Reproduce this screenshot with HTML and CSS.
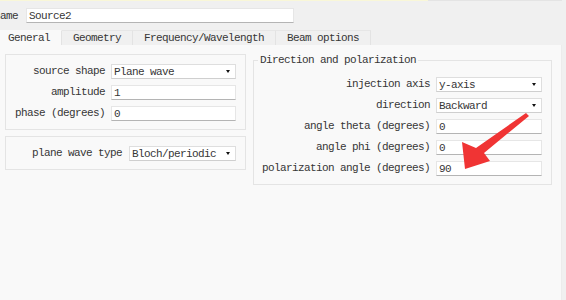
FILE: index.html
```html
<!DOCTYPE html>
<html lang="en">
<head>
    <meta charset="UTF-8">
    <title>Source2</title>
    <link rel="stylesheet" href="styles.css">
</head>
<body>

    <div class="topline"></div>

    <!-- object name -->
    <div class="name-row">
        <span class="name-label">name</span>
        <div class="field name-field">Source2</div>
    </div>

    <!-- tab bar -->
    <div class="tabs">
        <div class="tab active">General</div>
        <div class="tab">Geometry</div>
        <div class="tab">Frequency/Wavelength</div>
        <div class="tab">Beam options</div>
    </div>

    <div class="panel">
        <div class="left-col">
            <div class="group group-shape">
                <span class="label">source shape</span>
                <div class="combo">Plane wave</div>
                <span class="label">amplitude</span>
                <div class="field">1</div>
                <span class="label">phase (degrees)</span>
                <div class="field">0</div>
            </div>

            <div class="group group-type">
                <span class="label">plane wave type</span>
                <div class="combo">Bloch/periodic</div>
            </div>
        </div>

        <fieldset class="direction">
            <legend>Direction and polarization</legend>
            <div class="rows">
                <span class="label">injection axis</span>
                <div class="combo">y-axis</div>
                <span class="label">direction</span>
                <div class="combo">Backward</div>
                <span class="label">angle theta (degrees)</span>
                <div class="field">0</div>
                <span class="label">angle phi (degrees)</span>
                <div class="field">0</div>
                <span class="label">polarization angle (degrees)</span>
                <div class="field">90</div>
            </div>
        </fieldset>
    </div>

    <!-- red annotation arrow -->
    <svg class="arrow" width="566" height="300" viewBox="0 0 566 300">
        <polygon points="526,113 529,116 484,153 490,161 465,169 462,142 476,148" fill="#f03434"/>
    </svg>

</body>
</html>
```

FILE: styles.css
```css
body {
    margin: 0;
    background-color: #f0f0f0;
    font-family: 'Liberation Mono', monospace;
    font-size: 11px;
    letter-spacing: -0.6px;
    color: #363636;
    height: 300px;
    overflow: hidden;
    position: relative;
}

.topline {
    height: 1px;
    width: 562px;
    background: linear-gradient(to right, #f9f7d8 0, #f9f7d8 428px, #e4e4e4 428px);
}

.name-row {
    display: flex;
    align-items: flex-start;
    height: 29px;
    margin-left: -6px;
}

.name-label {
    width: 24px;
    margin-top: 8px;
    line-height: 14px;
}

.name-field {
    width: 268px;
    margin-top: 7px;
    margin-left: 8px;
}

.tabs {
    display: flex;
    height: 15px;
}

.tab {
    padding: 0 11px;
    line-height: 15px;
    border-top: 1px solid #e6e6e6;
    border-right: 1px solid #e3e3e3;
    box-sizing: border-box;
    height: 15px;
}

.tab.active {
    background-color: #f9f9f9;
    border-top-color: #f9f9f9;
    padding: 0 12px 0 8px;
    width: 62px;
}

.panel {
    display: flex;
    align-items: flex-start;
    gap: 7px;
    width: 562px;
    height: 255px;
    box-sizing: border-box;
    padding: 9px 0 0 5px;
    background-color: #f9f9f9;
    border-right: 1px solid #ececec;
}

.left-col {
    display: flex;
    flex-direction: column;
    gap: 6px;
    width: 241px;
}

.group {
    display: grid;
    align-items: center;
    row-gap: 6px;
    column-gap: 6px;
    border: 1px solid #e4e4e4;
    padding: 9px 9px 8px 0;
}

.group-shape {
    grid-template-columns: 1fr 125px;
}

.group-type {
    grid-template-columns: 1fr 107px;
    column-gap: 7px;
}

.label {
    justify-self: end;
    white-space: nowrap;
    line-height: 15px;
}

.field,
.combo {
    height: 15px;
    line-height: 14px;
    box-sizing: border-box;
    padding-left: 2px;
    background-color: #fff;
    white-space: nowrap;
}

.field {
    border: 1px solid #e6e6e6;
    border-bottom-color: #b4b4b4;
}

.combo {
    position: relative;
    border: 1px solid #dedede;
    border-bottom-color: #cfcfcf;
}

.combo::after {
    content: "";
    position: absolute;
    right: 5px;
    top: 5px;
    border-left: 2.5px solid transparent;
    border-right: 2.5px solid transparent;
    border-top: 3px solid #111;
}

.direction {
    margin: 0;
    padding: 0 9px 8px 4px;
    width: 299px;
    box-sizing: border-box;
    border: 1px solid #e4e4e4;
    min-width: 0;
}

.direction legend {
    padding: 0 2px;
    line-height: 13px;
}

.rows {
    display: grid;
    grid-template-columns: 1fr 106px;
    align-items: center;
    row-gap: 6px;
    column-gap: 6px;
    margin-top: 10px;
}

.arrow {
    position: absolute;
    left: 0;
    top: 0;
    pointer-events: none;
}
```
